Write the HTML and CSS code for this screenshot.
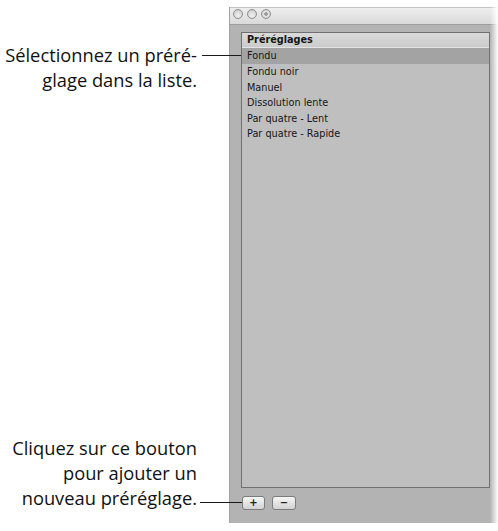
FILE: index.html
```html
<!DOCTYPE html>
<html lang="fr">
<head>
<meta charset="utf-8">
<title>Préréglages</title>
<link rel="stylesheet" href="styles.css">
</head>
<body>
<div class="page">
  <div class="annotations">
    <p class="note note-top">Sélectionnez un préré-<br>glage dans la liste.</p>
    <p class="note note-bottom">Cliquez sur ce bouton<br>pour ajouter un<br>nouveau préréglage.</p>
  </div>
  <div class="window">
    <div class="titlebar">
      <span class="light"></span>
      <span class="light"></span>
      <span class="light light-zoom"></span>
    </div>
    <div class="window-body">
      <div class="list">
        <div class="list-header">Préréglages</div>
        <div class="row selected">Fondu</div>
        <div class="row">Fondu noir</div>
        <div class="row">Manuel</div>
        <div class="row">Dissolution lente</div>
        <div class="row">Par quatre - Lent</div>
        <div class="row">Par quatre - Rapide</div>
      </div>
      <div class="buttons">
        <span class="btn btn-add">+</span>
        <span class="btn btn-remove">−</span>
      </div>
    </div>
  </div>
</div>
</body>
</html>
```
FILE: styles.css
```css
html, body {
  margin: 0;
  padding: 0;
  background: #ffffff;
}
.page {
  width: 498px;
  height: 531px;
  display: flex;
  align-items: flex-start;
  overflow: hidden;
}
.annotations {
  width: 229px;
  height: 531px;
  flex: none;
  display: flex;
  flex-direction: column;
  padding-bottom: 21px;
  box-sizing: border-box;
  position: relative;
  z-index: 2;
}
.note {
  margin: 0;
  padding-right: 32px;
  text-align: right;
  font-family: "Open Sans", "Liberation Sans", sans-serif;
  font-size: 18.3px;
  line-height: 25px;
  color: #111;
  position: relative;
  white-space: nowrap;
}
.note-top {
  margin-top: 42px;
}
.note-bottom {
  margin-top: auto;
}
.note::after {
  content: "";
  position: absolute;
  height: 1px;
  background: #1a1a1a;
}
.note-top::after {
  top: 13px;
  right: -12px;
  width: 39px;
}
.note-bottom::after {
  bottom: 7px;
  right: -13px;
  width: 42px;
}
.window {
  flex: none;
  width: 269px;
  height: 516px;
  margin-top: 7px;
  background: #b3b3b3;
  border-left: 1px solid #a2a2a2;
  box-sizing: border-box;
  display: flex;
  flex-direction: column;
  position: relative;
}
.window::after {
  content: "";
  position: absolute;
  top: 0;
  right: 0;
  width: 8px;
  height: 100%;
  background: linear-gradient(to right, rgba(255,255,255,0), #ffffff);
}
.titlebar {
  height: 18px;
  box-sizing: border-box;
  flex: none;
  background: linear-gradient(#eeeeee, #d9d9d9);
  border-top: 1px solid #c4c4c4;
  border-bottom: 1px solid #9c9c9c;
  display: flex;
  align-items: center;
  gap: 4px;
  padding-left: 3px;
  padding-bottom: 4px;
}
.light {
  width: 8px;
  height: 8px;
  border-radius: 50%;
  border: 1px solid #8e8e8e;
  background: radial-gradient(circle at 50% 70%, #f2f2f2, #c4c4c4);
}
.light-zoom {
  background: radial-gradient(circle at 50% 50%, #9a9a9a 0 1.5px, #e6e6e6 2px, #c4c4c4);
}
.window-body {
  flex: 1;
  padding: 7px 0 0 11px;
  display: flex;
  flex-direction: column;
}
.list {
  width: 249px;
  height: 456px;
  box-sizing: border-box;
  border: 1px solid #707070;
  background: #bfbfbf;
  font-family: "DejaVu Sans", "Liberation Sans", sans-serif;
  font-size: 9.7px;
  color: #161616;
}
.list-header {
  height: 14px;
  line-height: 14px;
  padding-left: 5px;
  font-weight: bold;
  background: linear-gradient(#dadada, #cbcbcb);
  border-bottom: 1px solid #e4e4e4;
}
.row {
  height: 15.5px;
  line-height: 15.5px;
  padding-left: 5px;
}
.row.selected {
  height: 16px;
  line-height: 16px;
  background: #a3a3a3;
}
.buttons {
  display: flex;
  gap: 7px;
  margin-top: 8px;
  padding-left: 1px;
}
.btn {
  width: 23px;
  height: 14px;
  box-sizing: border-box;
  border: 1px solid #7c7c7c;
  border-radius: 3px;
  background: linear-gradient(#f6f6f6, #d2d2d2);
  display: flex;
  align-items: center;
  justify-content: center;
  font-family: "DejaVu Sans", sans-serif;
  font-weight: bold;
  font-size: 10px;
  line-height: 1;
  color: #222;
}
.btn-remove {
  width: 24px;
}
```
